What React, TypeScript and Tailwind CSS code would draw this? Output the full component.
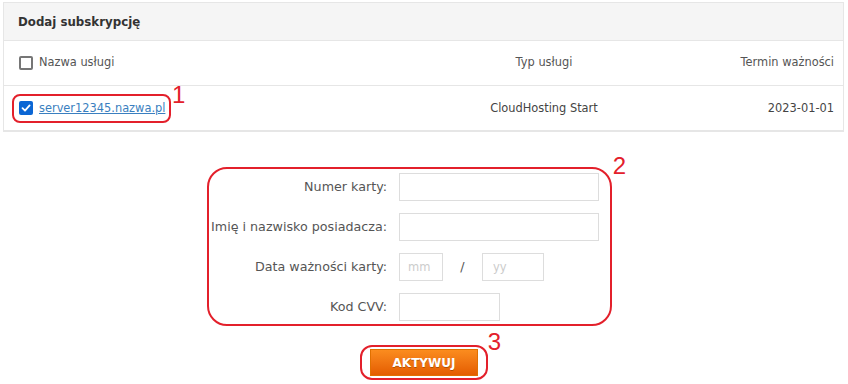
import React from 'react'

const red = 'border-[#e3202b]'

const Checkbox = ({ checked }: { checked?: boolean }) =>
  checked ? (
    <span className="flex h-[14px] w-[14px] items-center justify-center rounded-[2px] bg-[#0b66d4]">
      <svg width="10" height="10" viewBox="0 0 10 10" fill="none">
        <path d="M1.5 5.2 L4 7.6 L8.6 2.4" stroke="white" strokeWidth="1.8" strokeLinecap="round" strokeLinejoin="round" />
      </svg>
    </span>
  ) : (
    <span className="block h-[14px] w-[14px] rounded-[2px] border-2 border-[#767676] bg-white" />
  )

const Field = ({ label, children }: { label: string; children: React.ReactNode }) => (
  <div className="flex h-[28px] items-center">
    <div className="flex w-[189px] shrink-0 justify-end whitespace-nowrap pr-[12px] text-[#555]">{label}</div>
    {children}
  </div>
)

const App = () => {
  return (
    <div className="h-[384px] w-[848px] bg-white pt-[2px] text-[11.4px] text-[#444]" style={{ fontFamily: '"DejaVu Sans", Verdana, sans-serif' }}>
      <div className="ml-[3px] w-[841px] border border-b-2 border-[#e6e6e6]">
        <div className="flex h-[38px] items-center border-b border-[#e6e6e6] bg-[#f5f5f5] pl-[14px] pt-[2px] text-[11.8px] font-bold text-[#333]">
          Dodaj subskrypcję
        </div>
        <div className="flex h-[45px] items-center border-b border-[#e6e6e6] pl-[15px] pr-[9px] text-[#555]">
          <div className="flex w-[426px] items-center gap-[6px]">
            <Checkbox />
            <span>Nazwa usługi</span>
          </div>
          <div className="w-[198px] text-center">Typ usługi</div>
          <div className="flex-1 text-right">Termin ważności</div>
        </div>
        <div className="flex h-[44px] items-center pl-[15px] pr-[9px] pt-[1px] text-[#444]">
          <div className="flex w-[426px] items-center">
            <div className="relative flex items-center gap-[6px]">
              <Checkbox checked />
              <a href="#" className="text-[#3a7fc0] underline">server12345.nazwa.pl</a>
              <span className={`pointer-events-none absolute -bottom-[6px] -left-[7px] -right-[6px] -top-[6px] rounded-[8px] border-2 ${red}`} />
              <span className="absolute -right-[20px] -top-[17px] text-[24px] leading-none text-[#e3202b]" style={{ fontFamily: '"Liberation Sans", Arial, sans-serif' }}>1</span>
            </div>
          </div>
          <div className="w-[198px] text-center">CloudHosting Start</div>
          <div className="flex-1 text-right">2023-01-01</div>
        </div>
      </div>

      <div className={`relative ml-[207px] mt-[35px] flex w-[405px] flex-col gap-[12px] rounded-[20px] border-2 ${red} pb-[3px] pl-[1px] pt-[4px] text-[12.7px]`}>
        <span className="absolute -right-[16px] -top-[15px] text-[24px] leading-none text-[#e3202b]" style={{ fontFamily: '"Liberation Sans", Arial, sans-serif' }}>2</span>
        <Field label="Numer karty:">
          <input className="h-[28px] w-[200px] border border-[#dddddd] bg-white outline-none" />
        </Field>
        <Field label="Imię i nazwisko posiadacza:">
          <input className="h-[28px] w-[200px] border border-[#dddddd] bg-white outline-none" />
        </Field>
        <Field label="Data ważności karty:">
          <input placeholder="mm" className="h-[28px] w-[44px] border border-[#dddddd] bg-white px-[8px] text-[11.5px] outline-none placeholder:text-[#cccccc]" />
          <span className="w-[39px] text-center text-[#555]">/</span>
          <input placeholder="yy" className="h-[28px] w-[62px] border border-[#dddddd] bg-white px-[10px] text-[11.5px] outline-none placeholder:text-[#cccccc]" />
        </Field>
        <Field label="Kod CVV:">
          <input className="h-[28px] w-[101px] border border-[#dddddd] bg-white outline-none" />
        </Field>
      </div>

      <div className="mt-[19px] flex justify-center">
        <div className={`relative rounded-[12px] border-2 ${red} px-[8px] py-[2px]`}>
          <button className="flex h-[27px] w-[108px] items-center justify-center border border-[#e07000] bg-gradient-to-b from-[#fb8c1e] to-[#e45c00] text-[12px] font-bold text-white [text-shadow:0_1px_0_rgba(0,0,0,0.25)]">
            AKTYWUJ
          </button>
          <span className="absolute -right-[15px] -top-[17px] text-[24px] leading-none text-[#e3202b]" style={{ fontFamily: '"Liberation Sans", Arial, sans-serif' }}>3</span>
        </div>
      </div>
    </div>
  )
}

export default App
